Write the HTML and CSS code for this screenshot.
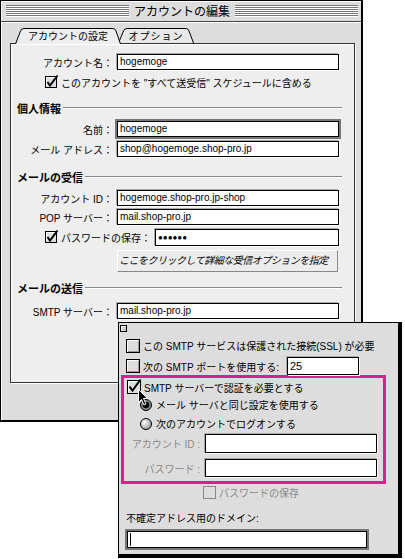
FILE: index.html
```html
<!DOCTYPE html>
<html lang="ja">
<head>
    <meta charset="UTF-8">
    <title>アカウントの編集</title>
    <link rel="stylesheet" href="styles.css">
</head>
<body>
    <div class="window main-window">
        <div class="titlebar">
            <div class="stripes"></div>
            <span class="title">アカウントの編集</span>
            <div class="stripes"></div>
        </div>
        <div class="window-body">
            <div class="tabs">
                <div class="tab tab-active">
                    <svg width="106" height="16" viewBox="0 0 106 16"><path d="M0.5 16 L5.5 3 Q6.5 0.5 9 0.5 H98 Q100 0.5 101 3 L105.5 16" fill="#eee" stroke="#000"/></svg>
                    <span>アカウントの設定</span>
                </div>
                <div class="tab tab-second">
                    <svg width="76" height="15" viewBox="0 0 76 15"><path d="M0.5 15 L5.5 3 Q6.5 0.5 9 0.5 H68 Q70 0.5 71 3 L75.5 15" fill="#e8e8e8" stroke="#000"/></svg>
                    <span>オプション</span>
                </div>
            </div>

            <div class="panel">
                <div class="row"><span class="label">アカウント名：</span><div class="field">hogemoge</div></div>
                <div class="check-row row-schedule">
                    <svg class="box" width="13" height="13" viewBox="0 0 13 13"><rect x="0.5" y="0.5" width="11" height="11" fill="#ddd" stroke="#000"/><path d="M1.5 10.5 V1.5 H10.5" fill="none" stroke="#fff"/><path d="M2.5 6 L5 9.5 L12.5 -0.5" fill="none" stroke="#000" stroke-width="2"/></svg>
                    <span>このアカウントを "すべて送受信" スケジュールに含める</span>
                </div>

                <div class="section sec-personal">個人情報</div>
                <div class="row row-name"><span class="label">名前：</span><div class="field focus">hogemoge</div></div>
                <div class="row row-mail"><span class="label">メール アドレス：</span><div class="field">shop@hogemoge.shop-pro.jp</div></div>

                <div class="section sec-receive">メールの受信</div>
                <div class="row row-id"><span class="label">アカウント ID：</span><div class="field">hogemoge.shop-pro.jp-shop</div></div>
                <div class="row row-pop"><span class="label">POP サーバー：</span><div class="field">mail.shop-pro.jp</div></div>
                <div class="check-row row-pass">
                    <svg class="box" width="13" height="13" viewBox="0 0 13 13"><rect x="0.5" y="0.5" width="11" height="11" fill="#ddd" stroke="#000"/><path d="M1.5 10.5 V1.5 H10.5" fill="none" stroke="#fff"/><path d="M2.5 6 L5 9.5 L12.5 -0.5" fill="none" stroke="#000" stroke-width="2"/></svg>
                    <span>パスワードの保存：</span>
                    <div class="field field-pass">●●●●●●</div>
                </div>
                <div class="button">ここをクリックして詳細な受信オプションを指定</div>

                <div class="section sec-send">メールの送信</div>
                <div class="row row-smtp"><span class="label">SMTP サーバー：</span><div class="field">mail.shop-pro.jp</div></div>
            </div>
        </div>
    </div>

    <div class="window popup">
        <div class="close-box"></div>
        <div class="p-row p-ssl">
            <svg class="box" width="14" height="14" viewBox="0 0 14 14"><rect x="0.5" y="0.5" width="13" height="13" fill="#ddd" stroke="#000"/><path d="M1.5 12.5 V1.5 H12.5" fill="none" stroke="#fff"/><path d="M2 12.5 H12.5 V2" fill="none" stroke="#999"/></svg>
            <span>この SMTP サービスは保護された接続(SSL) が必要</span>
        </div>
        <div class="p-row p-port">
            <svg class="box" width="14" height="14" viewBox="0 0 14 14"><rect x="0.5" y="0.5" width="13" height="13" fill="#ddd" stroke="#000"/><path d="M1.5 12.5 V1.5 H12.5" fill="none" stroke="#fff"/><path d="M2 12.5 H12.5 V2" fill="none" stroke="#999"/></svg>
            <span>次の SMTP ポートを使用する:</span>
            <div class="field field-port">25</div>
        </div>

        <div class="auth-box">
            <div class="p-row p-auth">
                <svg class="box" width="14" height="14" viewBox="0 0 14 14"><rect x="0.5" y="0.5" width="13" height="13" fill="#ddd" stroke="#000"/><path d="M1.5 12.5 V1.5 H12.5" fill="none" stroke="#fff"/><path d="M2.5 6.5 L5.5 10.5 L13.5 -0.5" fill="none" stroke="#000" stroke-width="2"/></svg>
                <span>SMTP サーバーで認証を必要とする</span>
            </div>
            <div class="p-row p-radio1">
                <svg class="radio" width="12" height="12" viewBox="0 0 12 12"><circle cx="6" cy="6" r="5.5" fill="#888" stroke="#000"/><circle cx="6" cy="6" r="3.2" fill="#000"/></svg>
                <span>メール サーバと同じ設定を使用する</span>
            </div>
            <div class="p-row p-radio2">
                <svg class="radio" width="12" height="12" viewBox="0 0 12 12"><defs><radialGradient id="rg" cx="0.35" cy="0.35" r="0.7"><stop offset="0" stop-color="#fff"/><stop offset="1" stop-color="#999"/></radialGradient></defs><circle cx="6" cy="6" r="5.5" fill="url(#rg)" stroke="#000"/></svg>
                <span>次のアカウントでログオンする</span>
            </div>
            <div class="p-field-row p-acc">
                <span class="p-label">アカウント ID :</span>
                <div class="field p-input"></div>
            </div>
            <div class="p-field-row p-pw">
                <span class="p-label">パスワード :</span>
                <div class="field p-input"></div>
            </div>
        </div>

        <div class="p-row p-save">
            <svg class="box" width="13" height="13" viewBox="0 0 13 13"><rect x="0.5" y="0.5" width="12" height="12" fill="#ddd" stroke="#888"/></svg>
            <span>パスワードの保存</span>
        </div>
        <div class="p-domain-label">不確定アドレス用のドメイン:</div>
        <div class="field focus field-domain"><span class="caret"></span></div>

        <svg class="cursor" width="11" height="17" viewBox="0 0 11 17"><path d="M0.5 0.5 V13.5 L3.5 10.5 L6 16 L8 15 L5.5 9.5 H9.5 Z" fill="#000" stroke="#fff"/></svg>
    </div>
</body>
</html>
```

FILE: styles.css
```css
* {
    box-sizing: border-box;
}

body {
    margin: 0;
    width: 405px;
    height: 559px;
    position: relative;
    overflow: hidden;
    background: #fff;
    color: #000;
    font-family: "Liberation Sans", "Noto Sans CJK JP", sans-serif;
    font-size: 10px;
}

svg {
    overflow: visible;
    flex-shrink: 0;
}

.window {
    position: absolute;
    background: #ddd;
    border: 1px solid #000;
}

/* main window */

.main-window {
    left: 0;
    top: 0;
    width: 363px;
    height: 422px;
    border-right-width: 2px;
    border-bottom-width: 2px;
}

.titlebar {
    height: 21px;
    display: flex;
    align-items: center;
    gap: 5px;
    padding: 0 3px 0 5px;
    border-bottom: 1px solid #444;
    box-shadow: inset 1px 1px 0 #fff;
}

.stripes {
    flex: 1;
    height: 12px;
    background: repeating-linear-gradient(to bottom, #777 0 1px, #fff 1px 2px);
}

.title {
    font-family: "Noto Sans CJK JP", sans-serif;
    font-size: 12px;
    line-height: 14px;
}

.window-body {
    height: 398px;
    padding: 6px 6px 0 9px;
    box-shadow: inset 1px 1px 0 #fff;
}

.tabs {
    display: flex;
    height: 15px;
    padding-left: 5px;
    position: relative;
    z-index: 1;
}

.tab {
    position: relative;
    width: 106px;
    height: 15px;
    display: flex;
    align-items: center;
    justify-content: center;
}

.tab svg {
    position: absolute;
    left: 0;
    top: 0;
}

.tab span {
    position: relative;
    padding-top: 2px;
    line-height: 12px;
}

.tab-active {
    z-index: 2;
}

.tab-second {
    width: 76px;
    margin-left: -3px;
    letter-spacing: 1px;
}

.panel {
    height: 340px;
    background: #eee;
    border: 1px solid #333;
    box-shadow: inset 1px 1px 0 #fff, 1px 1px 0 #fff;
    padding: 10px 15px 0 0;
}

.row {
    display: flex;
    align-items: center;
    height: 16px;
}

.label {
    width: 102px;
    margin-right: 4px;
    text-align: right;
    white-space: nowrap;
}

.field {
    flex: 1;
    height: 16px;
    background: #fff;
    border: 1px solid #000;
    box-shadow: -1px -1px 0 #aaa, 1px 1px 0 #fff;
    padding: 0 2px;
    line-height: 14px;
    white-space: nowrap;
    overflow: hidden;
}

.field.focus {
    box-shadow: 0 0 0 2px #777;
}

.check-row {
    display: flex;
    align-items: center;
    gap: 3px;
    height: 14px;
    padding-left: 34px;
    white-space: nowrap;
}

.row-schedule {
    margin-top: 5px;
}

.section {
    display: flex;
    align-items: center;
    height: 14px;
    margin-right: -9px;
    padding: 0 6px;
    font-family: "Noto Sans CJK JP", sans-serif;
    font-size: 11px;
    font-weight: bold;
}

.section::after {
    content: "";
    flex: 1;
    margin-left: 2px;
    border-top: 1px solid #888;
    border-bottom: 1px solid #fff;
}

.sec-personal {
    margin-top: 12px;
}

.row-name {
    margin-top: 6px;
}

.row-mail {
    margin-top: 4px;
}

.sec-receive {
    margin-top: 13px;
}

.row-id {
    margin-top: 6px;
}

.row-pop {
    margin-top: 3px;
}

.row-pass {
    margin-top: 4px;
    height: 17px;
}

.field-pass {
    flex: none;
    width: 184px;
    height: 17px;
    margin-left: auto;
    font-size: 8px;
    letter-spacing: 0;
    line-height: 15px;
}

.button {
    margin: 4px 0 0 106px;
    width: 221px;
    height: 22px;
    background: #ececec;
    border: 1px solid;
    border-color: #fff #888 #888 #fff;
    padding-left: 1px;
    line-height: 20px;
    font-style: italic;
    letter-spacing: -0.5px;
    white-space: nowrap;
}

.sec-send {
    margin-top: 9px;
}

.row-smtp {
    margin-top: 8px;
}

/* smtp popup */

.popup {
    left: 118px;
    top: 322px;
    width: 284px;
    height: 236px;
    border-right-width: 4px;
    border-bottom-width: 4px;
}

.close-box {
    width: 7px;
    height: 7px;
    margin: 2px 0 0 1px;
    background: #ccc;
    border: 1px solid #000;
    box-shadow: inset 1px 1px 0 #fff;
}

.p-row {
    display: flex;
    align-items: center;
    gap: 3px;
    height: 15px;
    padding-left: 7px;
    white-space: nowrap;
}

.p-ssl {
    margin-top: 6px;
}

.p-port {
    margin-top: 4px;
    height: 18px;
}

.field-port {
    flex: none;
    width: 72px;
    height: 18px;
    margin: 0 39px 0 auto;
    font-size: 11px;
    line-height: 16px;
}

.auth-box {
    width: 265px;
    height: 109px;
    margin-left: 2px;
    border: 3px solid #e8198b;
}

.p-auth {
    margin-top: 2px;
    height: 14px;
    padding-left: 3px;
}

.p-radio1 {
    margin-top: 4px;
    height: 13px;
    padding-left: 16px;
    gap: 4px;
}

.p-radio2 {
    margin-top: 6px;
    height: 13px;
    padding-left: 16px;
    gap: 4px;
}

.p-field-row {
    display: flex;
    align-items: center;
    height: 19px;
}

.p-acc {
    margin-top: 4px;
}

.p-pw {
    margin-top: 6px;
    height: 18px;
}

.p-label {
    width: 76px;
    margin-right: 5px;
    text-align: right;
    color: #888;
    white-space: nowrap;
}

.p-input {
    flex: none;
    width: 172px;
    height: 100%;
}

.p-save {
    margin-top: 2px;
    height: 13px;
    padding-left: 84px;
    color: #888;
}

.p-domain-label {
    margin-top: 14px;
    padding-left: 7px;
    height: 12px;
    line-height: 12px;
}

.field-domain {
    flex: none;
    width: 240px;
    height: 17px;
    margin: 6px 0 0 8px;
    padding: 1px 2px;
}

.caret {
    display: block;
    width: 1px;
    height: 13px;
    background: #000;
}

.cursor {
    position: absolute;
    left: 19px;
    top: 66px;
}
```
